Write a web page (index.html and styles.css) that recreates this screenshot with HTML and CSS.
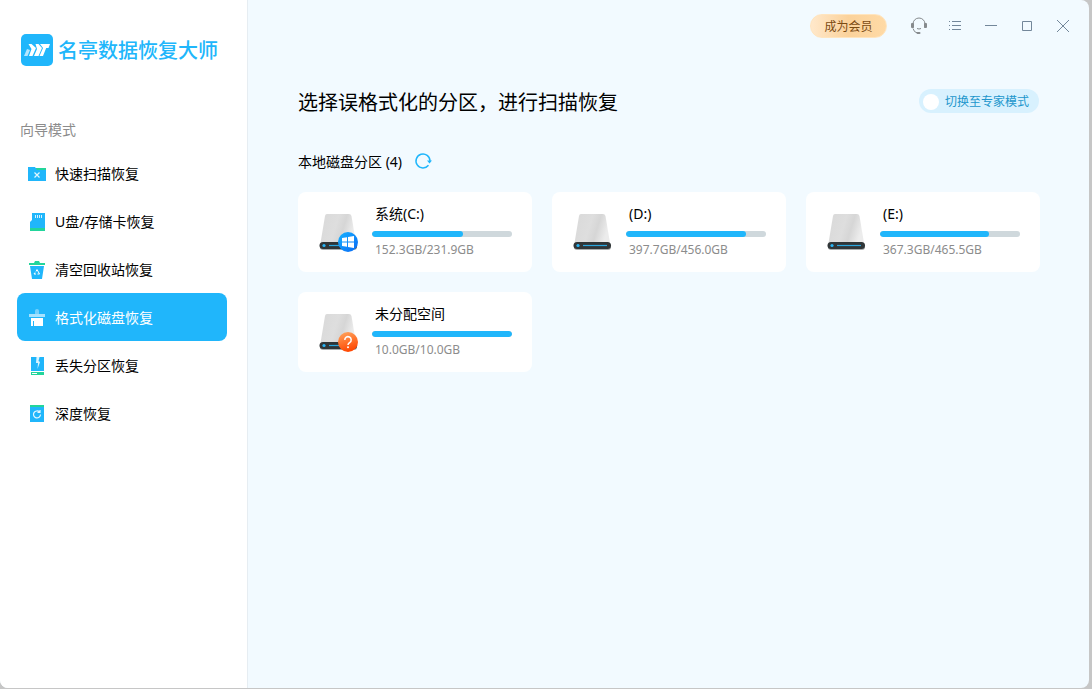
FILE: index.html
```html
<!DOCTYPE html>
<html lang="zh-CN">
<head>
<meta charset="utf-8">
<title>名亭数据恢复大师</title>
<link rel="stylesheet" href="styles.css">
</head>
<body>
<svg class="defs" aria-hidden="true">
  <defs>
    <linearGradient id="metal" x1="0" y1="0" x2="1" y2="0.25">
      <stop offset="0" stop-color="#d9d9d9"/><stop offset="0.5" stop-color="#dedede"/><stop offset="0.72" stop-color="#d6d6d6"/><stop offset="1" stop-color="#ececec"/>
    </linearGradient>
    <linearGradient id="win" x1="0" y1="0" x2="1" y2="1">
      <stop offset="0" stop-color="#16b4ff"/><stop offset="1" stop-color="#0a68f5"/>
    </linearGradient>
    <linearGradient id="ask" x1="0" y1="0" x2="0.3" y2="1">
      <stop offset="0" stop-color="#ffa860"/><stop offset="1" stop-color="#ff4a05"/>
    </linearGradient>
    <symbol id="drive" viewBox="0 0 40 40">
      <path d="M2 33h37v2a3 3 0 0 1-3 3H5a3 3 0 0 1-3-3z" fill="#a9adae"/>
      <path d="M9 2h22q2 0 2.500 2L38 31H2.500L7 4Q7.300 2 9 2z" fill="url(#metal)"/>
      <rect x="1.500" y="30" width="37.500" height="7" rx="3.500" fill="#303638"/>
      <circle cx="6" cy="33.500" r="1.600" fill="#27b5f5"/>
      <path d="M11 33.500h24" stroke="#2aa6dd" stroke-width="1.200"/>
    </symbol>
  </defs>
</svg>
<div class="window">
  <aside class="sidebar">
    <div class="brand">
      <svg class="brand-mark" viewBox="0 0 32 32" aria-hidden="true">
        <rect width="32" height="32" rx="5" fill="#20b6fb"/>
        <path d="m3 22 3-7 3 1-2.500 6z" fill="#b5e7ff"/>
        <path d="M7.500 10h3l4.500 4-3.500 8H8l2.500-7z" fill="#fff"/>
        <path d="M14.500 10h3l3.500 4-3.500 8h-4.500l3-7z" fill="#fff"/>
        <path d="M19 10h10l-1.500 4h-2.300L22 22h-3.500l3.500-8z" fill="#fff"/>
      </svg>
      <span class="brand-name">名亭数据恢复大师</span>
    </div>
    <p class="mode">向导模式</p>
    <nav class="nav">
      <a class="nav-item" href="#scan">
        <svg class="nav-icon" viewBox="0 0 20 20" aria-hidden="true"><path d="M8 5h11v3H8z" fill="#22d59b"/><path d="M1 4h7l2 3h9v11H1z" fill="#20b6fb"/><path d="m7.500 9.500 5 5m0-5-5 5" stroke="#e3f7ff" stroke-width="1.200"/></svg>
        <span class="nav-text">快速扫描恢复</span></a>
      <a class="nav-item" href="#card">
        <svg class="nav-icon" viewBox="0 0 20 20" aria-hidden="true"><path d="M5 2h13v15H3v-6l2-2z" fill="#20b6fb"/><path d="M3 17h15v3H3z" fill="#22d59b"/><path d="M8.500 4v3m2-3v3m2-3v3m2-3v3" stroke="#d5f2ff"/></svg>
        <span class="nav-text">U盘/存储卡恢复</span></a>
      <a class="nav-item" href="#recycle">
        <svg class="nav-icon" viewBox="0 0 20 20" aria-hidden="true"><path d="M2 4h5l1-2h4l1 2h5v2H2z" fill="#22d59b"/><path d="M3 7h14l-2 13H5z" fill="#20b6fb"/><path d="m9 12.500 1-2 2.500 4.500h-2M9 15H7l1-1.500" fill="none" stroke="#fff"/></svg>
        <span class="nav-text">清空回收站恢复</span></a>
      <a class="nav-item active" href="#format" aria-current="page">
        <svg class="nav-icon" viewBox="0 0 20 20" aria-hidden="true"><path d="M8 7V4a2 2 0 0 1 4 0v3z" fill="#76d1fc"/><path d="M2 7h16v3H2z" fill="#a6e2fe"/><path d="M4 11h12v8H7v-5H6v5H4z" fill="#fff"/></svg>
        <span class="nav-text">格式化磁盘恢复</span></a>
      <a class="nav-item" href="#lost">
        <svg class="nav-icon" viewBox="0 0 20 20" aria-hidden="true"><path d="M4 2h13v14H4z" fill="#20b6fb"/><path d="M9.500 2h3l-1 4 1.500 1-2.500 7 .5-6H9z" fill="#d9f4ff"/><path d="M4 17h13v3H4z" fill="#22d59b"/><path d="M5 18.500h5" stroke="#fff"/></svg>
        <span class="nav-text">丢失分区恢复</span></a>
      <a class="nav-item" href="#deep">
        <svg class="nav-icon" viewBox="0 0 20 20" aria-hidden="true"><path d="M3 2h14v3H3z" fill="#22d59b"/><path d="M3 4h14v15H3z" fill="#20b6fb"/><path d="M12.500 9a3.500 3.500 0 1 0 1 2.500M10.500 9.500h2.500V7" fill="none" stroke="#e3f7ff" stroke-width="1.200"/></svg>
        <span class="nav-text">深度恢复</span></a>
    </nav>
  </aside>
  <div class="main">
    <header class="topbar">
      <button class="vip" type="button">成为会员</button>
      <div class="tools">
        <button class="tool" type="button" aria-label="客服"><svg viewBox="0 0 20 20" aria-hidden="true"><path d="M4 12V8a6 6 0 0 1 12 0v4M4 12.500q1 4 4.500 4.500" fill="none" stroke="#868a8d"/><rect x="2" y="7" width="3" height="5" rx="1" fill="#868a8d"/><rect x="15" y="7" width="3" height="5" rx="1" fill="#868a8d"/><path d="M8 12.500q2 1 4 0" fill="none" stroke="#868a8d"/><rect x="7.500" y="16" width="4" height="2" rx="1" fill="#868a8d"/></svg></button>
        <button class="tool" type="button" aria-label="菜单"><svg viewBox="0 0 20 20" aria-hidden="true"><path d="M4 5.500h1m2 0h9M4 9.500h1m2 0h9M4 13.500h1m2 0h9" stroke="#73879a"/></svg></button>
        <button class="tool" type="button" aria-label="最小化"><svg viewBox="0 0 20 20" aria-hidden="true"><path d="M4 9.500h12" stroke="#73879a"/></svg></button>
        <button class="tool" type="button" aria-label="最大化"><svg viewBox="0 0 20 20" aria-hidden="true"><path d="M5.500 5.500h9v9h-9z" fill="none" stroke="#73879a"/></svg></button>
        <button class="tool" type="button" aria-label="关闭"><svg viewBox="0 0 20 20" aria-hidden="true"><path d="m4 4 12 12m0-12L4 16" stroke="#73879a"/></svg></button>
      </div>
    </header>
    <main class="content">
      <div class="heading">
        <h1 class="title">选择误格式化的分区，进行扫描恢复</h1>
        <button class="expert" type="button"><span class="knob"></span>切换至专家模式</button>
      </div>
      <div class="section">
        <h2 class="subtitle">本地磁盘分区 (4)</h2>
        <button class="refresh" type="button" aria-label="刷新"><svg viewBox="0 0 18 18" aria-hidden="true"><path d="M14.500 13.300A7 7 0 1 1 16 9" fill="none" stroke="#20b6fb" stroke-width="1.500"/><path d="M13 8.500h5l-2.500 3z" fill="#20b6fb"/></svg></button>
      </div>
      <div class="grid">
        <button class="card" type="button">
          <svg class="disk" viewBox="0 0 40 40" aria-hidden="true"><use href="#drive"/><circle cx="30" cy="30" r="10" fill="url(#win)"/><path d="m24 26 5-.8v4.300h-5zm6-1 6-1v5.500h-6zm-6 5.500h5v4.300l-5-.8zm6 0h6V36l-6-1z" fill="#fff"/></svg>
          <span class="info"><span class="name">系统(C:)</span><span class="bar"><span class="fill" style="width:65%"></span></span><span class="size">152.3GB/231.9GB</span></span>
        </button>
        <button class="card" type="button">
          <svg class="disk" viewBox="0 0 40 40" aria-hidden="true"><use href="#drive"/></svg>
          <span class="info"><span class="name">(D:)</span><span class="bar"><span class="fill" style="width:86%"></span></span><span class="size">397.7GB/456.0GB</span></span>
        </button>
        <button class="card" type="button">
          <svg class="disk" viewBox="0 0 40 40" aria-hidden="true"><use href="#drive"/></svg>
          <span class="info"><span class="name">(E:)</span><span class="bar"><span class="fill" style="width:78%"></span></span><span class="size">367.3GB/465.5GB</span></span>
        </button>
        <button class="card" type="button">
          <svg class="disk" viewBox="0 0 40 40" aria-hidden="true"><use href="#drive"/><circle cx="30" cy="30" r="10" fill="url(#ask)"/><path d="M26.800 28a3.200 3.200 0 1 1 5 2.500q-1.800 1-1.800 2.500" fill="none" stroke="#fff" stroke-width="1.500"/><circle cx="30" cy="35.200" r="1" fill="#fff"/></svg>
          <span class="info"><span class="name">未分配空间</span><span class="bar"><span class="fill" style="width:100%"></span></span><span class="size">10.0GB/10.0GB</span></span>
        </button>
      </div>
    </main>
  </div>
</div>
</body>
</html>
```
FILE: styles.css
```css
* {
  box-sizing: border-box;
}

body {
  display: flex;
  min-height: 100vh;
  margin: 0;
  padding: 0 3px 1px 0;
  background: #c6c6c6;
  color: #000;
  font: 14px/20px "Noto Sans", "Noto Sans CJK SC", sans-serif;
}

button {
  padding: 0;
  border: 0;
  background: none;
  color: inherit;
  font: inherit;
  cursor: pointer;
}

.defs {
  position: absolute;
  width: 0;
  height: 0;
}

.window {
  display: flex;
  flex: 1;
  overflow: hidden;
  border-radius: 0 8px 8px 8px;
  background: #f2faff;
}

.sidebar {
  flex: none;
  width: 248px;
  border-right: 1px solid #e6edf2;
  background: #fff;
}

.brand {
  display: flex;
  align-items: center;
  gap: 5px;
  padding: 34px 0 0 21px;
}

.brand-mark {
  width: 32px;
  height: 32px;
}

.brand-name {
  color: #20b6fb;
  font-family: "Noto Sans CJK SC", sans-serif;
  font-size: 20px;
  font-weight: 500;
  line-height: 32px;
}

.mode {
  margin: 54px 0 9px 20px;
  color: #8c8c8c;
}

.nav {
  padding: 0 20px 0 17px;
}

.nav-item {
  display: flex;
  align-items: center;
  gap: 8px;
  height: 48px;
  padding-left: 10px;
  border-radius: 8px;
  color: #000;
  text-decoration: none;
}

.nav-item.active {
  background: #20b6fb;
  color: #fff;
}

.nav-icon {
  width: 20px;
  height: 20px;
}

.nav-text {
  padding-top: 2px;
}

.main {
  flex: 1;
  min-width: 0;
}

.topbar {
  display: flex;
  align-items: center;
  justify-content: flex-end;
  gap: 14px;
  height: 52px;
  padding-right: 8px;
}

.vip {
  width: 77px;
  height: 24px;
  padding-top: 1px;
  border: 1px solid #ffe5bf;
  border-radius: 12px;
  background: linear-gradient(90deg, #ffe8cb, #fbd29b 50%, #ffdaa6);
  color: #7a4a12;
  font-size: 12px;
}

.tools {
  display: flex;
}

.tool {
  display: grid;
  place-items: center;
  width: 36px;
  height: 36px;
}

.tool svg {
  width: 20px;
  height: 20px;
}

.content {
  padding: 34px 49px 40px 50px;
}

.heading {
  display: flex;
  align-items: center;
  justify-content: space-between;
}

.title {
  margin: 0;
  padding-top: 2px;
  font-size: 20px;
  font-weight: 400;
  line-height: 30px;
}

.expert {
  display: flex;
  align-items: center;
  gap: 6px;
  width: 120px;
  height: 24px;
  margin: 0 1px 2px 0;
  padding: 1px 0 0 4px;
  border-radius: 12px;
  background: #d8f1fe;
  color: #2196cc;
  font-size: 12px;
}

.knob {
  width: 16px;
  height: 16px;
  border-radius: 50%;
  background: #fff;
}

.section {
  display: flex;
  align-items: center;
  gap: 12px;
  margin: 32px 0 20px;
}

.subtitle {
  margin: 0;
  padding-top: 2px;
  font-size: 14px;
  font-weight: 400;
}

.refresh {
  width: 18px;
  height: 18px;
}

.refresh svg {
  display: block;
}

.grid {
  display: grid;
  grid-template-columns: repeat(auto-fill, minmax(220px, 1fr));
  gap: 20px;
}

.card {
  display: flex;
  align-items: center;
  gap: 14px;
  min-height: 80px;
  padding: 12px 20px;
  border-radius: 8px;
  background: #fff;
  text-align: left;
}

.disk {
  flex: none;
  width: 40px;
  height: 40px;
}

.info {
  display: flex;
  flex: 1;
  flex-direction: column;
  padding-bottom: 2px;
}

.name {
  padding-left: 3px;
}

.bar {
  height: 6px;
  margin: 7px 0 5px;
  overflow: hidden;
  border-radius: 3px;
  background: #cfd8dc;
}

.fill {
  display: block;
  height: 100%;
  border-radius: 3px;
  background: #20b6fb;
}

.size {
  padding-left: 3px;
  color: #8c8c8c;
  font-size: 12px;
  line-height: 16px;
}
```
